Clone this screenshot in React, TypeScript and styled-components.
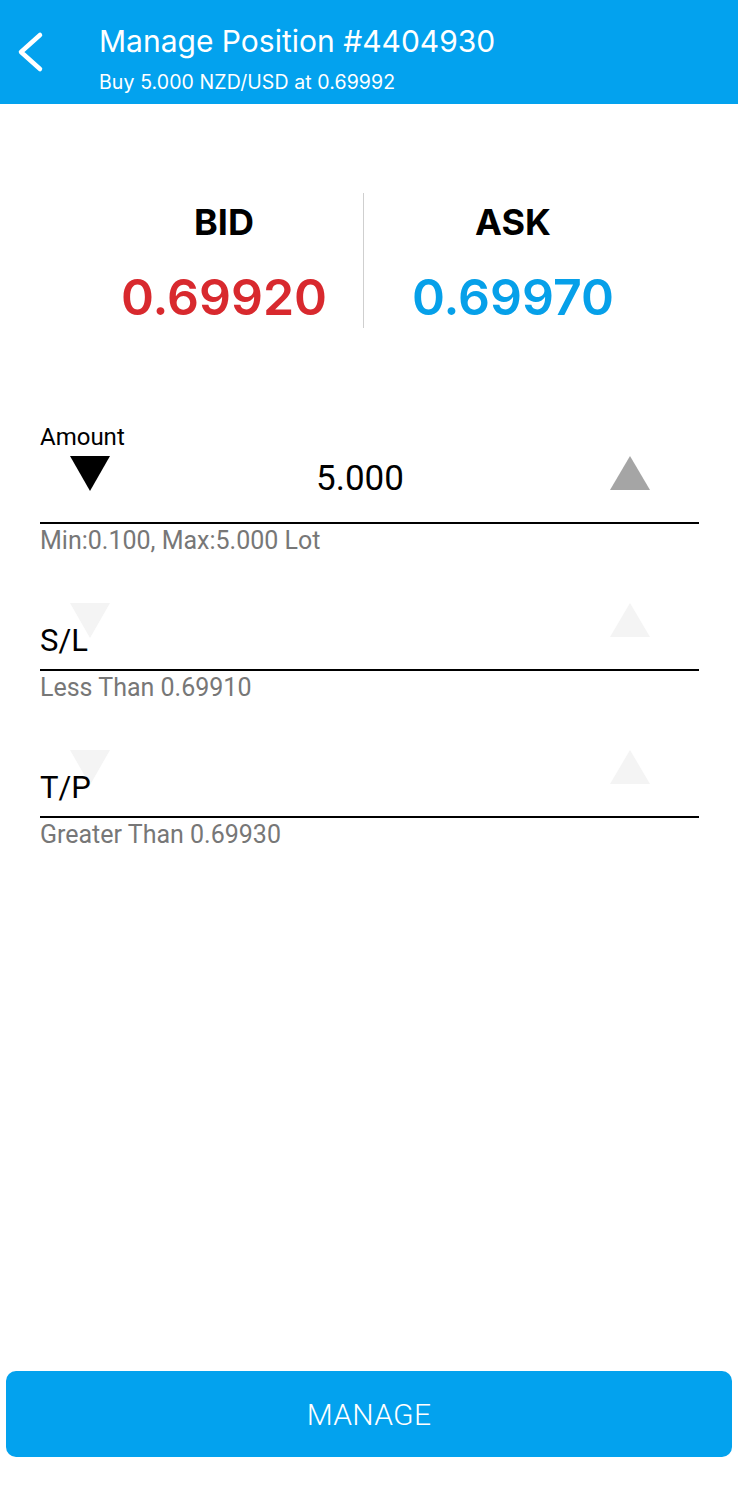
import React from 'react'
import styled, { createGlobalStyle } from 'styled-components'

const GlobalStyle = createGlobalStyle`
  html, body {
    margin: 0;
    padding: 0;
    background: #fff;
  }
  body {
    font-family: Inter, "Liberation Sans", sans-serif;
    -webkit-font-smoothing: antialiased;
  }
`

const BRAND = '#03a2ee'

const Page = styled.div`
  display: flex;
  flex-direction: column;
  min-height: 100vh;
  background: #fff;
`

const Header = styled.header`
  display: flex;
  align-items: stretch;
  height: 104px;
  background: ${BRAND};
  color: #fff;
`

const BackButton = styled.button`
  display: flex;
  align-items: center;
  justify-content: flex-start;
  width: 99px;
  padding: 0 0 0 16px;
  border: 0;
  background: transparent;
  cursor: pointer;
`

const HeaderText = styled.div`
  display: flex;
  flex-direction: column;
  padding-top: 22px;
`

const Title = styled.h1`
  margin: 0;
  font-family: Inter, "Liberation Sans", sans-serif;
  font-size: 30px;
  font-weight: 400;
  line-height: 38px;
`

const Subtitle = styled.div`
  margin-top: 11px;
  font-family: Inter, "Liberation Sans", sans-serif;
  font-size: 19.5px;
  line-height: 22px;
  letter-spacing: 0.1px;
`

const Quotes = styled.section`
  display: grid;
  grid-template-columns: 278px 1px 298px;
  margin: 89px 0 0 85px;
  height: 135px;
`

const QuoteCol = styled.div`
  display: flex;
  flex-direction: column;
  align-items: center;
  gap: 26px;
  padding-top: 10px;
`

const QuoteLabel = styled.div`
  font-family: Inter, "Liberation Sans", sans-serif;
  font-size: 36px;
  font-weight: 700;
  line-height: 38px;
  color: #000;
`

const QuotePrice = styled.div<{ $color: string }>`
  font-family: Inter, "Liberation Sans", sans-serif;
  font-size: 50px;
  font-weight: 600;
  line-height: 60px;
  color: ${p => p.$color};
`

const Divider = styled.div`
  background: #cfcfcf;
`

const Form = styled.section`
  display: flex;
  flex-direction: column;
  gap: 18px;
  margin-top: 97px;
  padding: 0 39px 0 40px;
`

const Field = styled.div`
  display: flex;
  flex-direction: column;
`

const FieldLabel = styled.div`
  height: 24px;
  font-family: Roboto, "Liberation Sans", sans-serif;
  font-size: 24px;
  line-height: 24px;
  color: #000;
`

const InputRow = styled.div`
  position: relative;
  display: flex;
  align-items: flex-start;
  justify-content: space-between;
  height: 75px;
  padding: 7px 49px 0 30px;
  box-sizing: border-box;
  border-bottom: 2px solid #000;
`

const Value = styled.div`
  flex: 1;
  padding-top: 3px;
  text-align: center;
  font-family: Roboto, "Liberation Sans", sans-serif;
  font-size: 35px;
  line-height: 40px;
  color: #000;
`

const Placeholder = styled.div`
  position: absolute;
  left: 0;
  bottom: 8px;
  font-family: Roboto, "Liberation Sans", sans-serif;
  font-size: 31px;
  line-height: 40px;
  color: #000;
`

const StepButton = styled.button`
  display: flex;
  padding: 0;
  border: 0;
  background: transparent;
  cursor: pointer;
`

const Hint = styled.div`
  margin-top: 4px;
  font-family: Roboto, "Liberation Sans", sans-serif;
  font-size: 25px;
  line-height: 26px;
  color: #777;
`

const Spacer = styled.div`
  flex: 1;
`

const ManageButton = styled.button`
  height: 86px;
  margin: 0 6px 35px;
  border: 0;
  border-radius: 10px;
  background: ${BRAND};
  color: #fff;
  font-family: Roboto, "Liberation Sans", sans-serif;
  font-size: 30px;
  font-weight: 300;
  letter-spacing: 0.3px;
  cursor: pointer;
`

const Chevron = () => (
  <svg width="30" height="42" viewBox="0 0 30 42">
    <polyline
      points="24,4 5,21 24,38"
      fill="none"
      stroke="#fff"
      strokeWidth="4.5"
      strokeLinecap="round"
      strokeLinejoin="round"
    />
  </svg>
)

const Triangle = ({ dir, color }: { dir: 'up' | 'down'; color: string }) => (
  <svg width="40" height="35" viewBox="0 0 40 35">
    <polygon points={dir === 'down' ? '0,0 40,0 20,35' : '20,0 40,34 0,34'} fill={color} />
  </svg>
)

type FieldProps = {
  label?: string
  value?: string
  placeholder?: string
  hint: string
  downColor: string
  upColor: string
}

const StepField = ({ label, value, placeholder, hint, downColor, upColor }: FieldProps) => (
  <Field>
    <FieldLabel>{label}</FieldLabel>
    <InputRow>
      <StepButton aria-label="decrease">
        <Triangle dir="down" color={downColor} />
      </StepButton>
      <Value>{value}</Value>
      <StepButton aria-label="increase">
        <Triangle dir="up" color={upColor} />
      </StepButton>
      {placeholder && <Placeholder>{placeholder}</Placeholder>}
    </InputRow>
    <Hint>{hint}</Hint>
  </Field>
)

export default function App() {
  return (
    <Page>
      <GlobalStyle />
      <Header>
        <BackButton aria-label="back">
          <Chevron />
        </BackButton>
        <HeaderText>
          <Title>Manage Position #4404930</Title>
          <Subtitle>Buy 5.000 NZD/USD at 0.69992</Subtitle>
        </HeaderText>
      </Header>

      <Quotes>
        <QuoteCol>
          <QuoteLabel>BID</QuoteLabel>
          <QuotePrice $color="#d8292e">0.69920</QuotePrice>
        </QuoteCol>
        <Divider />
        <QuoteCol>
          <QuoteLabel>ASK</QuoteLabel>
          <QuotePrice $color="#06a0e9">0.69970</QuotePrice>
        </QuoteCol>
      </Quotes>

      <Form>
        <StepField
          label="Amount"
          value="5.000"
          hint="Min:0.100, Max:5.000 Lot"
          downColor="#000"
          upColor="#a5a5a5"
        />
        <StepField
          placeholder="S/L"
          hint="Less Than 0.69910"
          downColor="#f4f4f4"
          upColor="#f4f4f4"
        />
        <StepField
          placeholder="T/P"
          hint="Greater Than 0.69930"
          downColor="#f4f4f4"
          upColor="#f4f4f4"
        />
      </Form>

      <Spacer />
      <ManageButton>MANAGE</ManageButton>
    </Page>
  )
}
